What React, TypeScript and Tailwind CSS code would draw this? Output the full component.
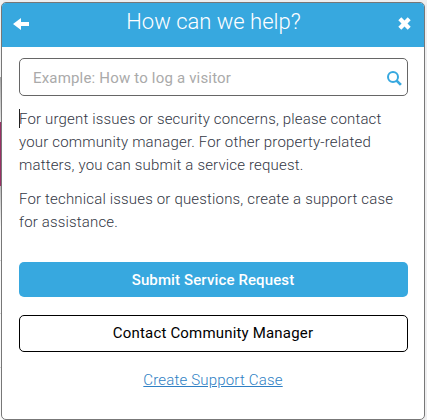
function ArrowLeftIcon() {
  return (
    <svg width="16" height="12" viewBox="0 0 16 12" fill="#fff" aria-hidden="true">
      <path d="M0 6 8 0v4h8v4H8v4z" />
    </svg>
  );
}

function CloseIcon() {
  return (
    <svg width="13" height="13" viewBox="0 0 13 13" fill="#fff" aria-hidden="true">
      <path d="M3.3.3 6.5 3.5 9.7.3l3 3-3.2 3.2 3.2 3.2-3 3-3.2-3.2-3.2 3.2-3-3 3.2-3.2L.3 3.3z" />
    </svg>
  );
}

function SearchIcon() {
  return (
    <svg width="15" height="15" viewBox="0 0 15 15" fill="none" stroke="#37a8df" aria-hidden="true">
      <circle cx="6" cy="6" r="5" strokeWidth="2" />
      <path d="m9.6 9.6 4.3 4.3" strokeWidth="2.7" />
    </svg>
  );
}

function App() {
  return (
    <div className="relative h-[420px] w-[427px] overflow-hidden bg-[#eeeeef] pt-[2px] pl-px font-[Roboto,sans-serif]">
      {/* page behind the panel */}
      <div className="absolute top-0 left-0 flex h-[420px] w-[3px] flex-col">
        <div className="h-[77px] bg-[#f2f2f2]" />
        <div className="h-[45px] bg-linear-to-b from-[#a5a5a5] to-[#e4e4e4]" />
        <div className="h-16 bg-[#983165]" />
        <div className="h-10 bg-linear-to-b from-[#b8b8b8] to-[#f5f5f5]" />
        <div className="h-[34px] bg-[#f8f8f8]" />
        <div className="h-[53px] border-t border-[#d5d5d5] bg-[#f8f8f8]" />
        <div className="h-[54px] border-t border-[#d5d5d5] bg-[#f8f8f8]" />
        <div className="h-[53px] border-t border-[#d5d5d5] bg-[#f8f8f8]" />
      </div>

      <div className="relative h-[418px] w-[424px] overflow-hidden rounded-[5px] border border-[#777] bg-white">
        <header className="flex h-11 items-center justify-between bg-[#37a8df] pr-[13px] pl-[11px] text-white">
          <button type="button" aria-label="Back" className="pb-[2px]">
            <ArrowLeftIcon />
          </button>
          <h1 className="mb-[7px] text-[22px] leading-[30px] font-light">How can we help?</h1>
          <button type="button" aria-label="Close" className="pb-[3px]">
            <CloseIcon />
          </button>
        </header>

        <div className="flex flex-col px-[17px] pt-[11px]">
          <div className="flex h-[38px] w-[389px] items-center justify-between rounded-[5px] border border-[#666] pt-[2px] pr-[5px] pl-[13px]">
            <input
              type="text"
              placeholder="Example: How to log a visitor"
              className="w-[320px] text-[15px] tracking-[0.18px] outline-none placeholder:text-[#aaa]"
            />
            <SearchIcon />
          </div>

          <div className="relative mt-3 w-[389px] text-[15px] leading-[23px] font-light tracking-[0.17px] text-[#333745]">
            <span className="absolute top-px left-0 h-[19px] w-px bg-[#222]" />
            <p>
              For urgent issues or security concerns, please contact
              <br />
              your community manager. For other property-related
              <br />
              matters, you can submit a service request.
            </p>
            <p className="mt-[11px]">
              For technical issues or questions, create a support case
              <br />
              for assistance.
            </p>
          </div>

          <button
            type="button"
            className="mt-7 h-[35px] w-[389px] rounded-[5px] bg-[#37a8df] pt-px pr-px text-[15px] font-medium tracking-[0.12px] text-white"
          >
            Submit Service Request
          </button>
          <button
            type="button"
            className="mt-[18px] h-[37px] w-[389px] rounded-[5px] border border-black pr-px text-[15px] tracking-[0.18px] text-black"
          >
            Contact Community Manager
          </button>
          <a
            href="#"
            className="mt-[17px] w-[389px] pr-px text-center text-[15px] leading-[23px] font-light tracking-[0.18px] text-[#2f7fc4] underline"
          >
            Create Support Case
          </a>
        </div>
      </div>
    </div>
  );
}

export default App;
